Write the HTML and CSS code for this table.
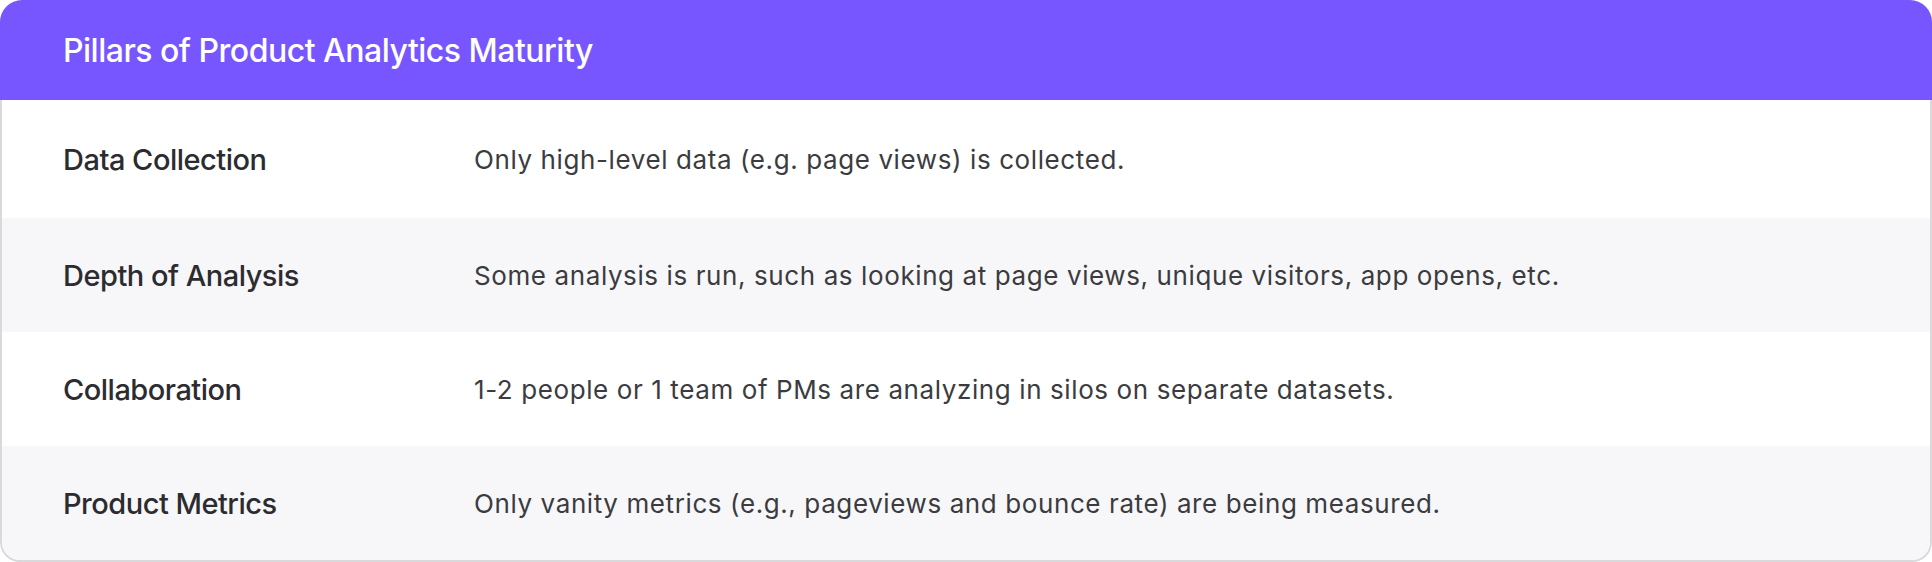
FILE: index.html
```html
<!DOCTYPE html>
<html lang="en">
<head>
<meta charset="utf-8">
<title>Pillars of Product Analytics Maturity</title>
<link rel="stylesheet" href="styles.css">
</head>
<body>
<div class="card">
  <div class="card-header">
    <h2 class="card-title">Pillars of Product Analytics Maturity</h2>
  </div>
  <div class="card-body">
    <div class="row row-first">
      <div class="label">Data Collection</div>
      <div class="desc">Only high-level data (e.g. page views) is collected.</div>
    </div>
    <div class="row row-alt">
      <div class="label">Depth of Analysis</div>
      <div class="desc">Some analysis is run, such as looking at page views, unique visitors, app opens, etc.</div>
    </div>
    <div class="row">
      <div class="label">Collaboration</div>
      <div class="desc">1-2 people or 1 team of PMs are analyzing in silos on separate datasets.</div>
    </div>
    <div class="row row-alt">
      <div class="label">Product Metrics</div>
      <div class="desc">Only vanity metrics (e.g., pageviews and bounce rate) are being measured.</div>
    </div>
  </div>
</div>
</body>
</html>
```

FILE: styles.css
```css
html, body {
  margin: 0;
  padding: 0;
  background: #ffffff;
}

body {
  font-family: Inter, "Noto Sans", "Liberation Sans", sans-serif;
  width: 1932px;
  height: 562px;
  overflow: hidden;
}

.card {
  display: flex;
  flex-direction: column;
  width: 1932px;
}

.card-header {
  height: 100px;
  background: #7856ff;
  border-radius: 22px 22px 0 0;
  display: flex;
  align-items: center;
  padding-left: 63px;
  box-sizing: border-box;
}

.card-title {
  margin: 0;
  color: #ffffff;
  font-size: 32px;
  font-weight: 500;
  letter-spacing: -0.5px;
}

.card-body {
  border: 2px solid #d9d9db;
  border-top: none;
  border-radius: 0 0 20px 20px;
  overflow: hidden;
}

.row {
  display: grid;
  grid-template-columns: 411px 1fr;
  align-items: center;
  height: 114px;
  padding-left: 61px;
  background: #ffffff;
}

.row-first {
  height: 118px;
}

.row-alt {
  background: #f7f7f9;
}

.label {
  font-size: 29px;
  font-weight: 500;
  color: #2c2c30;
  letter-spacing: -0.5px;
}

.desc {
  font-size: 26px;
  font-weight: 400;
  color: #3b3b40;
  letter-spacing: 0.6px;
}
```
